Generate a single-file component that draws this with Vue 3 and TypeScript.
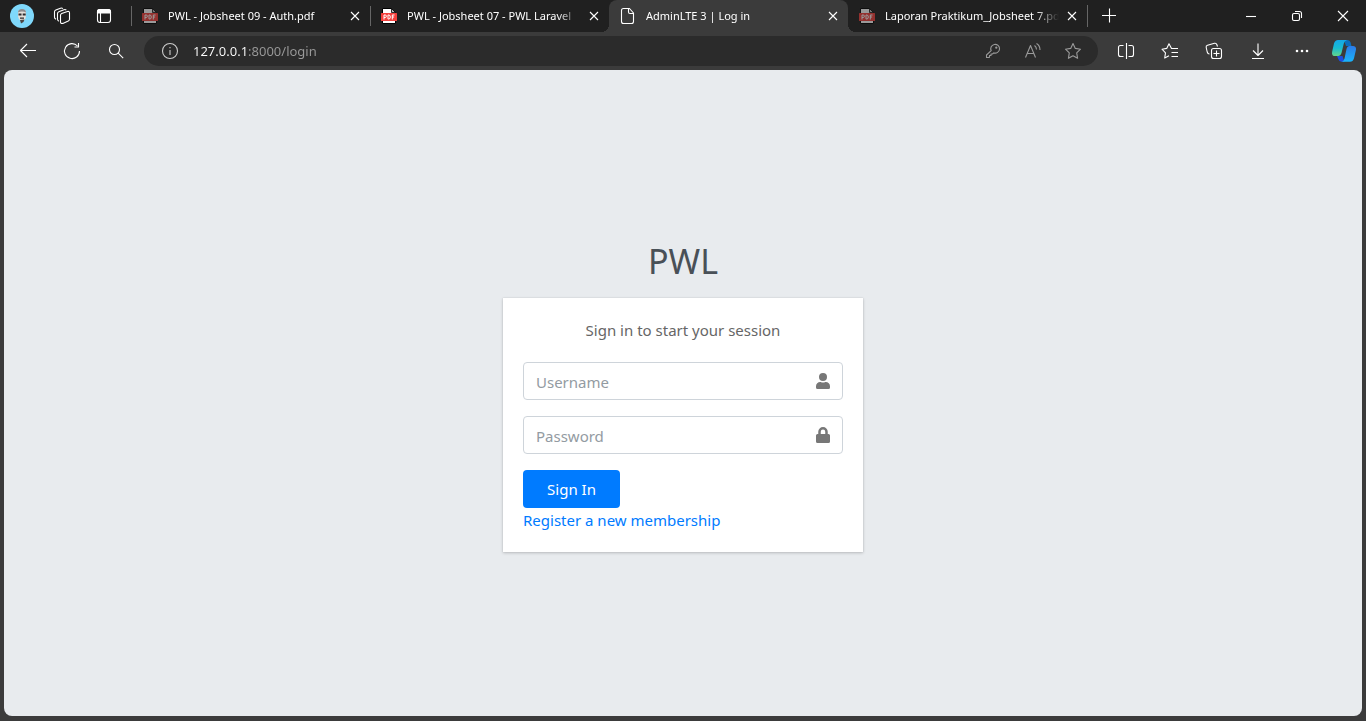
<script setup lang="ts">
import { ref } from 'vue'

interface Tab {
  title: string
  icon: 'pdf' | 'page'
  active?: boolean
  dimmed?: boolean
}

const tabs = ref<Tab[]>([
  { title: 'PWL - Jobsheet 09 - Auth.pdf', icon: 'pdf', dimmed: true },
  { title: 'PWL - Jobsheet 07 - PWL Laravel', icon: 'pdf' },
  { title: 'AdminLTE 3 | Log in', icon: 'page', active: true },
  { title: 'Laporan Praktikum_Jobsheet 7.pdf', icon: 'pdf', dimmed: true },
])

const address = ref('127.0.0.1:8000/login')
const username = ref('')
const password = ref('')
</script>

<template>
  <div class="browser">
    <header class="strip">
      <div class="strip-tools">
        <button class="tool narrow" aria-label="Profile">
          <svg width="24" height="24" viewBox="0 0 24 24">
            <circle cx="12" cy="12" r="12" fill="#7fd8fb" />
            <path d="M8 8Q8 5.500 12 5.500t4 2.500v3.500q0 3-1.500 4.500L13 17.500l-2 1.500V17q-3-2-3-5z" fill="#e4dfda" />
            <path d="M8 8.500q0-3.500 4-3.500t4 3.500q-4-2-8 0z" fill="#8d8b8e" />
            <path d="M8.500 9.500h3v2h-3zM12.700 9.500h3v2h-3zM10 13.500h4v1.200h-4z" fill="#2c2b2e" />
            <path d="M10 16 14.500 15.500 13.500 18 11 19.600z" fill="#4c4543" />
          </svg>
        </button>
        <button class="tool narrow" aria-label="Workspaces">
          <svg width="18" height="18" viewBox="0 0 18 18" class="line">
            <path d="M7.500 8.300Q7.500 7 8.700 6.500L14.500 4.500Q16.500 4 16.500 6v6.300q0 1.200-1.200 1.800l-5.500 2.300Q7.500 17 7.500 14.800z" />
            <path d="M5.800 14.300Q4.500 13.500 4.500 12.300V6.500Q4.500 5.200 5.800 4.700L11 2.700Q12.500 2.200 13.300 3.200" />
            <path d="M3 12.300Q1.500 11.500 1.500 10.300V4.800Q1.500 3.500 2.800 3L7.500 1.200Q9 .7 9.800 1.700" />
          </svg>
        </button>
        <button class="tool" aria-label="Tab actions">
          <svg width="16" height="16" viewBox="0 0 16 16" class="line">
            <rect x="1.500" y="1.500" width="13" height="13" rx="2.500" />
            <path d="M1.500 3.500Q1.500 1.500 3.500 1.500h9q2 0 2 2V5h-13z" fill="#fff" />
            <path d="M4.500 5v9.500" />
          </svg>
        </button>
      </div>

      <nav class="tabs" aria-label="Tabs">
        <div v-for="tab in tabs" :key="tab.title" class="tab" :class="{ active: tab.active }">
          <svg v-if="tab.icon === 'pdf'" class="tab-icon" :class="{ dimmed: tab.dimmed }" width="16" height="16" viewBox="0 0 16 16">
            <path d="M1.500 .5h9l4 4v11h-13z" fill="#fff" stroke="#000" />
            <path d="M10.500 .5v4h4z" fill="#bbb" stroke="#000" stroke-width=".8" />
            <rect x="0" y="5" width="16" height="8" rx=".5" fill="#f4403d" />
            <path d="M3 11.500V7h1.200q1.200 0 1.200 1.200T4.200 9.500H3M7 7v4h.8q1.500 0 1.500-2T7.800 7zM11.300 11.500V7h2.200M11.300 9h1.800" fill="none" stroke="#fff" />
          </svg>
          <svg v-else class="tab-icon line" width="16" height="18" viewBox="0 0 16 18">
            <path d="M3.500 1.500h6l4 4.500v8.500q0 2-2 2h-8q-2 0-2-2v-11q0-2 2-2zM8.500 1.500V5q0 1.500 1.500 1.500h3.500" />
          </svg>
          <a href="#" class="tab-title">{{ tab.title }}</a>
          <button class="tab-close" :aria-label="'Close ' + tab.title">
            <svg width="10" height="10" viewBox="0 0 10 10" class="line"><path d="m1 1 8 8M9 1 1 9" /></svg>
          </button>
        </div>
      </nav>

      <button class="tool new-tab" aria-label="New tab">
        <svg width="16" height="16" viewBox="0 0 16 16" class="line"><path d="M1 7.500h14M8.500 .5v14" /></svg>
      </button>

      <div class="window-controls">
        <button aria-label="Minimize">
          <svg width="12" height="12" viewBox="0 0 12 12" class="line"><path d="M1 6.500h10" /></svg>
        </button>
        <button aria-label="Restore">
          <svg width="12" height="12" viewBox="0 0 12 12" class="line">
            <rect x="1.500" y="3.500" width="7" height="7" rx="1.500" />
            <path d="M4 1.500h4.500q2 0 2 2V8" />
          </svg>
        </button>
        <button aria-label="Close window">
          <svg width="12" height="12" viewBox="0 0 12 12" class="line"><path d="m1 1 10 10M11 1 1 11" /></svg>
        </button>
      </div>
    </header>

    <div class="toolbar">
      <div class="group">
        <button class="tool" aria-label="Back">
          <svg width="18" height="16" viewBox="0 0 18 16" class="line"><path d="M17 7.500H1.500M8 1 1.500 7.500 8 14" /></svg>
        </button>
        <button class="tool" aria-label="Refresh">
          <svg width="18" height="18" viewBox="0 0 18 18" class="line">
            <path d="M14.500 4A7.500 7.500 0 1 0 16.500 9M15.500 1v4h-4" />
          </svg>
        </button>
        <button class="tool" aria-label="Search">
          <svg width="16" height="16" viewBox="0 0 16 16" class="line">
            <circle cx="6.500" cy="6.500" r="5" /><path d="m10.200 10.200 5 5" />
          </svg>
        </button>
      </div>

      <div class="address">
        <svg width="18" height="18" viewBox="0 0 18 18" class="line info">
          <circle cx="9" cy="9" r="7.500" /><path d="M9 8v5M9 5v1.300" />
        </svg>
        <input v-model="address" class="address-input" type="text" aria-label="Address" spellcheck="false" />
        <button class="tool narrow" aria-label="Saved passwords">
          <svg width="16" height="16" viewBox="0 0 16 16" class="line muted">
            <path d="M6.200 7.700A4.400 4.400 0 1 1 8.700 9.900L7.500 11H6v1.500H4.500V14L4 14.500H1.500V12z" />
            <circle cx="11.300" cy="4.700" r=".6" />
          </svg>
        </button>
        <button class="tool narrow" aria-label="Read aloud">
          <svg width="18" height="18" viewBox="0 0 18 18" class="line muted">
            <path d="M1.500 15.500 6.500 3.500l5 12M3.200 11.500h6.600M10.500 3.500q2 1.500 2 4M12.500 1.500q3.500 2 3.500 6.500" />
          </svg>
        </button>
        <button class="tool narrow" aria-label="Add to favorites">
          <svg width="18" height="18" viewBox="0 0 18 18" class="line muted">
            <path d="m9 1.500 2.300 4.900 5.200.8-3.800 3.700.9 5.400L9 13.700l-4.600 2.600.9-5.400L1.500 7.200l5.200-.8z" />
          </svg>
        </button>
      </div>

      <div class="group">
        <button class="tool" aria-label="Split screen">
          <svg width="18" height="18" viewBox="0 0 18 18" class="line">
            <path d="M6.500 3.500H3.500q-2 0-2 2v7q0 2 2 2h3M11.500 3.500h3q2 0 2 2v7q0 2-2 2h-3M9.500 1v16" />
          </svg>
        </button>
        <button class="tool" aria-label="Favorites">
          <svg width="18" height="18" viewBox="0 0 18 18" class="line">
            <path d="M17 6.500H10.500L8 1.800 5.700 6.400l-4.700.8 3.500 3.600-.8 5.200L8 13.700M10.500 10.500H17M10.500 14.500H17" />
          </svg>
        </button>
        <button class="tool" aria-label="Collections">
          <svg width="18" height="18" viewBox="0 0 18 18" class="line">
            <rect x="6.500" y="6.500" width="10" height="10" rx="2" />
            <path d="M11.500 8.500v6M8.500 11.500h6M4.500 12Q2.700 12 2.200 10L1.200 5.500Q.8 3.700 2.500 3.200L9.500 1.300Q11.200.9 11.800 2.500L12.500 4.500" />
          </svg>
        </button>
        <button class="tool" aria-label="Downloads">
          <svg width="16" height="18" viewBox="0 0 16 18" class="line">
            <path d="M8 1.500v12M3 8.500l5 5 5-5M2 16.500h12" />
          </svg>
        </button>
        <button class="tool" aria-label="Settings and more">
          <svg width="16" height="4" viewBox="0 0 16 4" fill="#fff">
            <circle cx="3" cy="2" r="1.300" /><circle cx="8" cy="2" r="1.300" /><circle cx="13" cy="2" r="1.300" />
          </svg>
        </button>
        <button class="tool narrow" aria-label="Copilot">
          <svg width="24" height="24" viewBox="0 0 24 24">
            <defs>
              <linearGradient id="wing-left" x1="0" y1="0" x2="0" y2="1">
                <stop offset="0" stop-color="#15a8e8" /><stop offset=".5" stop-color="#18bcd2" /><stop offset="1" stop-color="#63d58a" />
              </linearGradient>
              <linearGradient id="wing-right" x1="0" y1="0" x2="0" y2="1">
                <stop offset="0" stop-color="#2c7be8" /><stop offset="1" stop-color="#19b5fb" />
              </linearGradient>
            </defs>
            <path d="M12 1h3.500Q18 1 18.600 3.500L19.500 7H14z" fill="#0a6ebd" />
            <path d="M5 17h5.500l2 5.800H9.500Q7 22.800 6.300 20z" fill="#1d4fe0" />
            <path d="M6 1h9q-2.500.5-3.200 3.500L9.500 14Q8.600 17 6 17H3Q-.8 17 .2 12.500L2 4.500Q3 1 6 1z" fill="url(#wing-left)" />
            <path d="M17.500 7H21q3.800 0 2.800 4.500L22 19.300Q21 22.800 18 22.800H9.500q2.300-.5 3-3.300L14.500 10Q15.200 7 17.500 7z" fill="url(#wing-right)" />
          </svg>
        </button>
      </div>
    </div>

    <main class="page">
      <section class="login">
        <h1 class="logo">PWL</h1>
        <div class="card">
          <p class="message">Sign in to start your session</p>
          <form @submit.prevent>
            <div class="field">
              <input v-model="username" type="text" placeholder="Username" aria-label="Username" />
              <svg width="14" height="16" viewBox="0 0 448 512" fill="#777">
                <path d="M224 256a128 128 0 1 0 0-256 128 128 0 0 0 0 256zm89.600 32h-16.700a174 174 0 0 1-145.800 0h-16.700A134.400 134.400 0 0 0 0 422.400V464a48 48 0 0 0 48 48h352a48 48 0 0 0 48-48v-41.600A134.400 134.400 0 0 0 313.600 288z" />
              </svg>
            </div>
            <div class="field">
              <input v-model="password" type="password" placeholder="Password" aria-label="Password" />
              <svg width="14" height="16" viewBox="0 0 448 512" fill="#777">
                <path d="M400 224h-24v-72a152 152 0 0 0-304 0v72H48a48 48 0 0 0-48 48v192a48 48 0 0 0 48 48h352a48 48 0 0 0 48-48V272a48 48 0 0 0-48-48zm-104 0H152v-72a72 72 0 0 1 144 0z" />
              </svg>
            </div>
            <button class="submit" type="submit">Sign In</button>
          </form>
          <a href="#" class="register">Register a new membership</a>
        </div>
      </section>
    </main>
  </div>
</template>

<style>
body {
  margin: 0;
}
</style>

<style scoped>
.browser {
  display: flex;
  flex-direction: column;
  min-height: 100vh;
  background: #3b3b3b;
  font-family: "Segoe UI", "Noto Sans", sans-serif;
}

button {
  display: flex;
  align-items: center;
  justify-content: center;
  padding: 0;
  border: 0;
  background: none;
  font-family: inherit;
}

svg {
  flex: none;
}

.line {
  fill: none;
  stroke: #fff;
  stroke-width: 1.1;
  stroke-linejoin: round;
}

.muted {
  stroke: #9a9a9a;
}

.strip {
  display: flex;
  height: 32px;
  background: #202020;
}

.strip-tools {
  display: flex;
  padding: 0 5px 0 2px;
}

.tool {
  width: 44px;
  height: 32px;
}

.tool.narrow {
  width: 40px;
}

.tool.new-tab {
  width: 42px;
}

.tabs {
  display: flex;
  flex: 0 1 956px;
  min-width: 0;
  border-right: 1px solid #5c5c5c;
  border-image: linear-gradient(transparent 6px, #666 6px 26px, transparent 26px) 1;
}

.tab {
  position: relative;
  display: flex;
  flex: 1 1 0;
  align-items: center;
  min-width: 0;
  padding: 0 7px 0 11px;
  background: linear-gradient(#666, #666) 0 6px / 1px 20px no-repeat;
}

.tab.active {
  background: #3b3b3b;
  border-radius: 8px 8px 0 0;
}

.tab.active + .tab {
  background: none;
}

.tab.active::before,
.tab.active::after {
  content: "";
  position: absolute;
  bottom: 0;
  width: 8px;
  height: 8px;
}

.tab.active::before {
  right: 100%;
  background: radial-gradient(circle at 0 0, transparent 8px, #3b3b3b 8px);
}

.tab.active::after {
  left: 100%;
  background: radial-gradient(circle at 100% 0, transparent 8px, #3b3b3b 8px);
}

.dimmed {
  opacity: 0.55;
}

.tab-title {
  flex: 1;
  min-width: 0;
  margin-left: 10px;
  overflow: hidden;
  color: #fff;
  font-size: 11px;
  line-height: 20px;
  text-decoration: none;
  white-space: nowrap;
  mask-image: linear-gradient(to left, transparent, #000 24px);
}

.tab-close {
  width: 16px;
  height: 16px;
  margin-left: 5px;
}

.window-controls {
  display: flex;
  margin-left: auto;
}

.window-controls button {
  width: 46px;
}

.toolbar {
  display: flex;
  align-items: center;
  height: 38px;
  padding: 0 2px 0 6px;
}

.group {
  display: flex;
}

.address {
  display: flex;
  flex: 1;
  align-items: center;
  height: 30px;
  margin: 0 6px;
  padding: 0 5px 0 17px;
  border-radius: 15px;
  background: #2b2b2b;
}

.info {
  stroke: #ccc;
}

.address-input {
  flex: 1;
  min-width: 0;
  margin-left: 14px;
  padding: 0;
  border: 0;
  outline: 0;
  background: linear-gradient(to right, #fff 54px, #9a9a9a 54px);
  background-clip: text;
  color: transparent;
  font-family: inherit;
  font-size: 13px;
  line-height: 20px;
}

.page {
  display: flex;
  flex: 1;
  align-items: center;
  justify-content: center;
  margin: 0 4px 5px;
  border-radius: 8px;
  background: #e8ebee;
}

.login {
  width: 360px;
  padding-bottom: 2px;
}

.logo {
  margin: 0 0 12px;
  padding-top: 4px;
  color: #495057;
  font-size: 34px;
  font-weight: 400;
  line-height: 50px;
  text-align: center;
}

.card {
  padding: 20px;
  background: #fff;
  box-shadow: 0 0 1px rgba(0, 0, 0, 0.13), 0 1px 3px rgba(0, 0, 0, 0.2);
  font-size: 15px;
  line-height: 24px;
}

.message {
  margin: 0 0 20px;
  color: #666;
  text-align: center;
}

.field {
  display: flex;
  align-items: center;
  height: 36px;
  margin-bottom: 16px;
  padding: 0 12px;
  border: 1px solid #ced4da;
  border-radius: 4px;
}

.field input {
  flex: 1;
  min-width: 0;
  padding: 2px 0 0;
  border: 0;
  outline: 0;
  background: none;
  color: #495057;
  font-family: inherit;
  font-size: 15px;
  line-height: 24px;
}

.field input::placeholder {
  color: #939ba2;
}

.submit {
  width: 97px;
  height: 38px;
  border-radius: 4px;
  background: #007bff;
  color: #fff;
  font-size: 15px;
}

.register {
  display: block;
  width: fit-content;
  color: #007bff;
  text-decoration: none;
}
</style>
